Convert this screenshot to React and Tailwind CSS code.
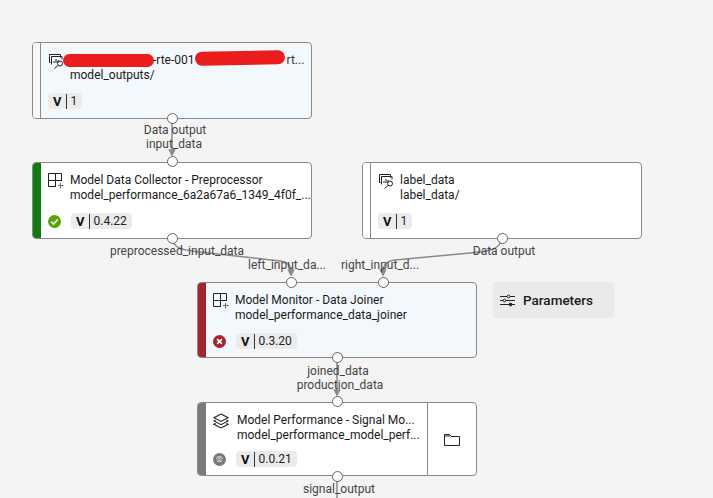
const font = { fontFamily: 'Roboto, sans-serif' }

function DatasetIcon() {
  return (
    <svg width="16" height="16" viewBox="0 0 16 16" fill="none" stroke="#222" strokeWidth="1" className="shrink-0">
      <path d="M2.500 9.500h-1v-8h11v3" />
      <path d="M3.500 11.500v-8h10.500v3" />
      <path d="M6 10V8M8 10V6M10 10V7" />
      <circle cx="12" cy="10.500" r="2.500" />
      <path d="M10 12.500 6.500 15.500" />
    </svg>
  )
}

function ComponentIcon() {
  return (
    <svg width="16" height="16" viewBox="0 0 16 16" fill="none" stroke="#222" strokeWidth="1" className="shrink-0">
      <path d="M8 13.500H.5V.5h13V8" />
      <path d="M.5 7.500h13M7.500.5v13" />
      <path d="M10 12.500h5.500M12.500 10v5.500" stroke="#666" />
    </svg>
  )
}

function LayersIcon() {
  return (
    <svg width="16" height="16" viewBox="0 0 16 16" fill="none" stroke="#222" strokeWidth="1.100" className="shrink-0">
      <path d="M8 1 15 4.700 8 8.400 1 4.700Z" />
      <path d="M2.500 7 1 8l7 3.700L15 8l-1.500-1" />
      <path d="M2.500 10.300 1 11.300 8 15l7-3.700-1.500-1" />
    </svg>
  )
}

function StatusIcon({ kind }) {
  if (kind === 'ok') {
    return (
      <svg width="13" height="13" viewBox="0 0 12 12" className="shrink-0">
        <circle cx="6" cy="6" r="6" fill="#57a300" />
        <path d="M3 6.200 5.200 8.300 9 4" fill="none" stroke="#fff" strokeWidth="1.500" />
      </svg>
    )
  }
  if (kind === 'error') {
    return (
      <svg width="13" height="13" viewBox="0 0 12 12" className="shrink-0">
        <circle cx="6" cy="6" r="6" fill="#a4262c" />
        <path d="M3.800 3.800 8.200 8.200M8.200 3.800 3.800 8.200" fill="none" stroke="#fff" strokeWidth="1.600" />
      </svg>
    )
  }
  return (
    <svg width="13" height="13" viewBox="0 0 12 12" className="shrink-0">
      <circle cx="6" cy="6" r="6" fill="#7a7a7a" />
      <path d="M2.800 5.200a3.800 3.800 0 0 1 6.400 0" fill="none" stroke="#fff" strokeWidth="0.900" />
      <path d="M4.300 6.200a2 2 0 0 1 3.400 0" fill="none" stroke="#fff" strokeWidth="0.800" />
      <path d="M3.800 7.500h4.400" fill="none" stroke="#fff" strokeWidth="0.900" />
    </svg>
  )
}

function VersionBadge({ version }) {
  return (
    <div className="flex h-[16px] items-center rounded-[4px] bg-[#ebebeb] px-[5px] text-[12px] leading-none text-[#222]">
      <span className="text-[13px] font-bold text-[#111]">V</span>
      <span className="mx-[4px] h-[15px] w-px bg-[#333]" />
      <span>{version}</span>
    </div>
  )
}

// free canvas, every node keeps its spot from the graph
function Node({ className, barColor, bg, icon, title, subtitle, status, version, folder, overlay, rowGap = 'mt-[10px]', textGap = 'gap-[6px]' }) {
  return (
    <div className={`absolute flex w-[280px] overflow-hidden rounded-[4px] border border-[#8a8a8a] ${bg} ${className}`}>
      <div className={`w-[8px] shrink-0 border-r ${barColor}`} />
      <div className="flex min-w-0 flex-1 flex-col pl-[7px] pr-[6px] pt-[10px]">
        <div className={`flex ${textGap}`}>
          {icon}
          <div className="min-w-0 flex-1 text-[12px] leading-[15px] text-[#1a1a1a]">
            <div className="whitespace-nowrap">{title}</div>
            <div className="whitespace-nowrap">{subtitle}</div>
          </div>
        </div>
        <div className={`flex items-center gap-[10px] ${rowGap}`}>
          {status && <StatusIcon kind={status} />}
          <VersionBadge version={version} />
        </div>
      </div>
      {folder && (
        <div className="flex w-[49px] shrink-0 items-center justify-center border-l border-[#8a8a8a]">
          <svg width="16" height="13" viewBox="0 0 16 13" fill="none" stroke="#222" strokeWidth="1">
            <path d="M.5 12.500V1.500h5l1.500 2h8.500v9Z" />
            <path d="M.5 3h5.500" />
          </svg>
        </div>
      )}
      {overlay}
    </div>
  )
}

function Port({ className }) {
  return <div className={`absolute h-[11px] w-[11px] rounded-full border border-[#666] bg-white ${className}`} />
}

function Label({ className, children }) {
  return (
    <div className={`absolute -translate-x-1/2 whitespace-nowrap text-[12px] leading-[15px] text-[#444] ${className}`}>
      {children}
    </div>
  )
}

export default function App() {
  return (
    <div className="relative h-[498px] w-[713px] overflow-hidden bg-[#f4f4f4]" style={font}>
      {/* Edges */}
      <svg className="absolute inset-0" width="713" height="498" fill="none" stroke="#8a8a8a" strokeWidth="1.500">
        <defs>
          <marker id="head" markerWidth="5" markerHeight="5" refX="2.500" refY="2.500" orient="auto">
            <path d="M0 0 5 2.500 0 5Z" fill="#8a8a8a" stroke="none" />
          </marker>
        </defs>
        <path d="M172 118V153" markerEnd="url(#head)" />
        <path d="M172 238C174 250 185 250 200 252L280 261C288 262 291 265 291 273" markerEnd="url(#head)" />
        <path d="M502 238C500 250 490 251 470 253L395 260C386 261 383 265 383 273" markerEnd="url(#head)" />
        <path d="M337 358V393" markerEnd="url(#head)" />
        <path d="M337 476V498" />
      </svg>

      {/* Nodes */}
      <Node
        className="left-[32px] top-[42px] h-[77px]"
        bg="bg-[#f3f8fc]"
        barColor="bg-[#f8f8f8] border-[#8a8a8a]"
        icon={<DatasetIcon />}
        title={
          <span className="flex items-center">
            <span className="w-[83px] shrink-0" />
            <span>-rte-001</span>
            <span className="w-[92px] shrink-0" />
            <span className="text-[#333]">rt...</span>
          </span>
        }
        subtitle="model_outputs/"
        version="1"
        overlay={
          <>
            {/* red scribbles over the hidden name */}
            <span className="absolute left-[30px] top-[11px] h-[13px] w-[91px] rounded-full bg-[#ea1c1c]" />
            <span className="absolute left-[162px] top-[8px] h-[14px] w-[90px] -rotate-1 rounded-full bg-[#ea1c1c]" />
          </>
        }
      />
      <Node
        className="left-[32px] top-[162px] h-[77px]"
        bg="bg-white"
        barColor="bg-[#107c10] border-[#107c10]"
        icon={<ComponentIcon />}
        title="Model Data Collector - Preprocessor"
        subtitle="model_performance_6a2a67a6_1349_4f0f_..."
        status="ok"
        version="0.4.22"
      />
      <Node
        className="left-[362px] top-[162px] h-[77px]"
        bg="bg-white"
        barColor="bg-white border-[#8a8a8a]"
        icon={<DatasetIcon />}
        title="label_data"
        subtitle="label_data/"
        version="1"
      />
      <Node
        className="left-[197px] top-[282px] h-[76px]"
        bg="bg-[#f3f8fc]"
        barColor="bg-[#a4262c] border-[#a4262c]"
        icon={<ComponentIcon />}
        title="Model Monitor - Data Joiner"
        subtitle="model_performance_data_joiner"
        status="error"
        version="0.3.20"
      />
      <Node
        className="left-[197px] top-[402px] h-[74px]"
        bg="bg-white"
        barColor="bg-[#7a7a7a] border-[#7a7a7a]"
        icon={<LayersIcon />}
        title="Model Performance - Signal Mo..."
        subtitle="model_performance_model_perf..."
        status="other"
        version="0.0.21"
        folder
        rowGap="mt-[8px]"
        textGap="gap-[8px]"
      />

      {/* Parameters button */}
      <div className="absolute left-[493px] top-[282px] flex h-[36px] w-[121px] items-center gap-[8px] bg-[#eaeaea] pl-[7px] pt-px text-[13.500px] font-medium text-[#1a1a1a]">
        <svg width="15" height="13" viewBox="0 0 15 13" fill="none" stroke="#222" strokeWidth="1">
          <path d="M0 2.500h7M10 2.500h5M0 6.500h3M6 6.500h9M0 10.500h9M12 10.500h3" />
          <circle cx="8.500" cy="2.500" r="1.400" />
          <circle cx="4.500" cy="6.500" r="1.400" />
          <circle cx="10.500" cy="10.500" r="1.400" fill="#222" />
        </svg>
        Parameters
      </div>

      {/* Ports */}
      <Port className="left-[167px] top-[113px]" />
      <Port className="left-[167px] top-[156px]" />
      <Port className="left-[167px] top-[233px]" />
      <Port className="left-[497px] top-[233px]" />
      <Port className="left-[286px] top-[277px]" />
      <Port className="left-[378px] top-[277px]" />
      <Port className="left-[332px] top-[352px]" />
      <Port className="left-[332px] top-[396px]" />
      <Port className="left-[332px] top-[471px]" />

      {/* Port labels */}
      <Label className="left-[175px] top-[123px]">Data output</Label>
      <Label className="left-[174px] top-[137px]">input_data</Label>
      <Label className="left-[177px] top-[244px]">preprocessed_input_data</Label>
      <Label className="left-[287px] top-[258px]">left_input_da...</Label>
      <Label className="left-[380px] top-[258px]">right_input_d...</Label>
      <Label className="left-[504px] top-[244px]">Data output</Label>
      <Label className="left-[338px] top-[364px]">joined_data</Label>
      <Label className="left-[340px] top-[378px]">production_data</Label>
      <Label className="left-[339px] top-[482px]">signal_output</Label>
    </div>
  )
}
